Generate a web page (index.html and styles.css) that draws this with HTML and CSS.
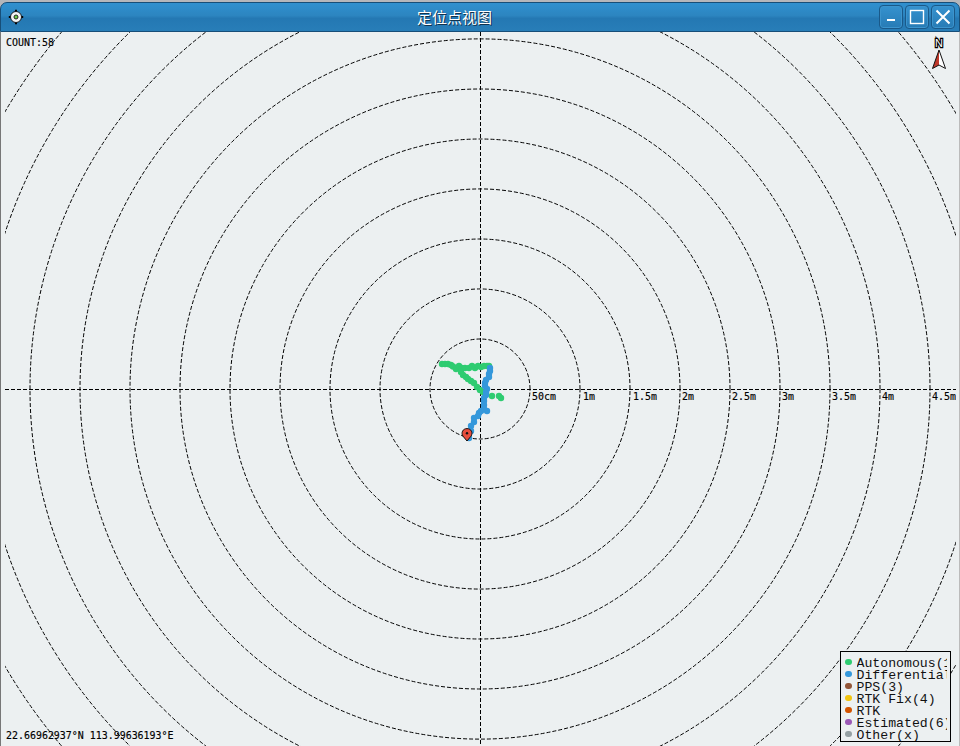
FILE: index.html
```html
<!DOCTYPE html>
<html lang="zh">
<head>
  <meta charset="utf-8">
  <title>定位点视图</title>
  <link rel="stylesheet" href="styles.css">
</head>
<body>
  <div class="window">
    <div class="titlebar">
      <svg class="app-icon" width="16" height="16" viewBox="0 0 16 16">
        <path d="M8 .8v14.400M.8 8h14.400" stroke="#000" stroke-width="2"/>
        <circle cx="8" cy="8" r="5.500" fill="#f4f4f4" stroke="#101820" stroke-width="1"/>
        <circle cx="8" cy="8" r="2" fill="#6cd04a" stroke="#222" stroke-width="1"/>
      </svg>
      <div class="title">定位点视图</div>
      <div class="window-buttons">
        <button class="win-button"><svg width="22" height="22"><path d="M7 14h8" stroke="#fff" stroke-width="2"/></svg></button>
        <button class="win-button"><svg width="22" height="22"><rect x="4.5" y="4.5" width="13" height="13" fill="none" stroke="#fff" stroke-width="1.4"/></svg></button>
        <button class="win-button"><svg width="22" height="22"><path d="M4.5 4.5l13 13M17.5 4.5l-13 13" stroke="#fff" stroke-width="2"/></svg></button>
      </div>
    </div>

    <div class="view">
      <svg class="plot" width="960" height="714" viewBox="0 32 960 714">
        <defs>
          <clipPath id="plot-area"><rect x="5" y="32" width="951" height="714"/></clipPath>
        </defs>
        <g clip-path="url(#plot-area)">
          <g id="rings" class="dashed"></g>
          <path class="dashed" d="M5 389.5H957M480.5 32V746"/>
          <g id="labels" class="small-text"></g>
          <g id="points"></g>
        </g>
        <!-- current position -->
        <path d="M467 441L463 436.200C460.700 432.800 462.800 428.600 467 428.600S473.300 432.800 471 436.200z" fill="#e74c3c" stroke="#111" stroke-width="1"/>
        <circle cx="467" cy="433.300" r="1.2" fill="#111"/>
        <!-- north arrow -->
        <text class="north" x="939" y="47" text-anchor="middle">N</text>
        <path d="M939 50L932.500 68.500L939 65z" fill="#c0392b"/>
        <path d="M939 50L945.500 68.500L939 65z" fill="#fff"/>
        <path d="M939 50L932.500 68.500L939 65L945.500 68.500z" fill="none" stroke="#111" stroke-width="1"/>
        <text class="small-text" x="6" y="46">COUNT:58</text>
        <text class="small-text" x="6" y="739">22.66962937°N 113.99636193°E</text>
      </svg>

      <div class="legend">
        <div class="legend-item"><span class="dot autonomous"></span><span class="name">Autonomous(1)</span></div>
        <div class="legend-item"><span class="dot differential"></span><span class="name">Differential(2)</span></div>
        <div class="legend-item"><span class="dot pps"></span><span class="name">PPS(3)</span></div>
        <div class="legend-item"><span class="dot rtk-fix"></span><span class="name">RTK Fix(4)</span></div>
        <div class="legend-item"><span class="dot rtk"></span><span class="name">RTK</span></div>
        <div class="legend-item"><span class="dot estimated"></span><span class="name">Estimated(6)</span></div>
        <div class="legend-item"><span class="dot other"></span><span class="name">Other(x)</span></div>
      </div>
    </div>
  </div>
  <script src="script.js"></script>
</body>
</html>
```
FILE: styles.css
```css
body {
  margin: 0;
  background-color: #b4b6bb;
  overflow: hidden;
}

.window {
  box-sizing: border-box;
  width: 960px;
  height: 746px;
  padding-top: 2px;
  display: flex;
  flex-direction: column;
}

.titlebar {
  box-sizing: border-box;
  height: 30px;
  display: grid;
  grid-template-columns: 80px 1fr 80px;
  align-items: center;
  border: 1px solid #174e78;
  border-radius: 7px 7px 0 0;
  background: linear-gradient(#3090cf, #2c85c0 45%, #2478b3 55%, #287eb8);
}

.app-icon {
  margin-left: 7px;
}

.title {
  text-align: center;
  color: #fff;
  font-family: "Noto Sans CJK SC", sans-serif;
  font-size: 15px;
  line-height: 26px;
  padding-right: 51px;
  text-shadow: 1px 1px 0 #12324d;
}

.window-buttons {
  display: flex;
  justify-content: flex-end;
  gap: 2px;
  padding-right: 4px;
}

.win-button {
  box-sizing: border-box;
  width: 24px;
  height: 24px;
  padding: 0;
  border: 1px solid #1a5989;
  border-radius: 4px;
  background: linear-gradient(#3592cf, #277bb5);
  box-shadow: inset 0 0 0 1px #3c94cd;
}

.win-button svg {
  display: block;
}

.view {
  box-sizing: border-box;
  position: relative;
  height: 714px;
  background-color: #ecf0f1;
  box-shadow: inset 1px 0 0 #777, inset -1px 0 0 #bbb;
}

.plot {
  display: block;
}

.dashed {
  fill: none;
  stroke: #000;
  stroke-width: 1;
  stroke-dasharray: 4 2;
}

.small-text {
  font-family: "DejaVu Sans Mono", monospace;
  font-size: 9.95px;
  fill: #000;
  stroke: #000;
  stroke-width: 0.15px;
  white-space: pre;
}

.north {
  font-family: "Liberation Sans", sans-serif;
  font-size: 11px;
  fill: #fff;
  stroke: #000;
  stroke-width: 2.4px;
  paint-order: stroke;
}

.legend {
  box-sizing: border-box;
  position: absolute;
  left: 840px;
  top: 619px;
  width: 111px;
  height: 91px;
  padding: 4px 3px 0 4px;
  border: 1px solid #000;
  background-color: #ecf0f1;
  overflow: hidden;
}

.legend-item {
  display: flex;
  align-items: center;
  gap: 5px;
  height: 12px;
}

.dot {
  flex: none;
  width: 6.5px;
  height: 6.5px;
  border-radius: 50%;
}

.name {
  flex: 1;
  overflow: hidden;
  height: 16px;
  padding-top: 4px;
  box-sizing: border-box;
  font-family: "Liberation Mono", monospace;
  font-size: 13.2px;
  line-height: 12px;
  white-space: nowrap;
  color: #111;
}

.autonomous {
  background-color: #2ecc71;
}

.differential {
  background-color: #3498db;
}

.pps {
  background-color: #935638;
}

.rtk-fix {
  background-color: #f1c40f;
}

.rtk {
  background-color: #d35400;
}

.estimated {
  background-color: #9b59b6;
}

.other {
  background-color: #95a0a3;
}
```
FILE: script.js
```js
const svgNS = "http://www.w3.org/2000/svg";
const cx = 480;
const cy = 389;

const autonomous = [
  [442, 364], [445, 364], [448, 364], [451, 365], [453, 366.5], [456, 369], [459, 366],
  [462, 368], [465, 368], [469, 368], [472, 366], [475, 368], [478, 366], [481, 367],
  [484, 366], [487, 366], [489, 366], [461, 372], [463, 375], [466, 377], [468, 379],
  [471, 381], [474, 383], [477, 387], [480, 390], [483, 392], [486, 393],
  [492, 396], [499, 396], [501, 398]
];

const differential = [
  [490, 368], [490, 371], [489, 374], [489, 377], [486, 380], [485, 383], [485, 386],
  [487, 389], [486, 392], [486, 395], [484, 398], [484, 401], [484, 405], [487, 411],
  [484, 409], [481, 411], [479, 413], [478, 416], [474, 418], [474, 422], [471, 426],
  [471, 431], [469, 438]
];

const labels = [
  ["50cm", 532], ["1m", 583], ["1.5m", 633], ["2m", 682], ["2.5m", 732],
  ["3m", 782], ["3.5m", 832], ["4m", 882], ["4.5m", 932]
];

function add(parent, tag, attrs, text) {
  const el = document.createElementNS(svgNS, tag);
  for (const key in attrs) {
    el.setAttribute(key, attrs[key]);
  }
  if (text) {
    el.textContent = text;
  }
  document.getElementById(parent).appendChild(el);
}

// one ring every 50cm, drawn counterclockwise from the east
for (let r = 50; r <= 600; r += 50) {
  add("rings", "path", {
    d: `M${cx + r} ${cy}A${r} ${r} 0 1 0 ${cx - r} ${cy}A${r} ${r} 0 1 0 ${cx + r} ${cy}`
  });
}

labels.forEach(([text, x]) => add("labels", "text", { x: x, y: 400 }, text));

autonomous.forEach(([x, y]) => add("points", "circle", { cx: x, cy: y, r: 3.2, fill: "#2ecc71" }));
differential.forEach(([x, y]) => add("points", "circle", { cx: x, cy: y, r: 3.2, fill: "#3498db" }));
```
